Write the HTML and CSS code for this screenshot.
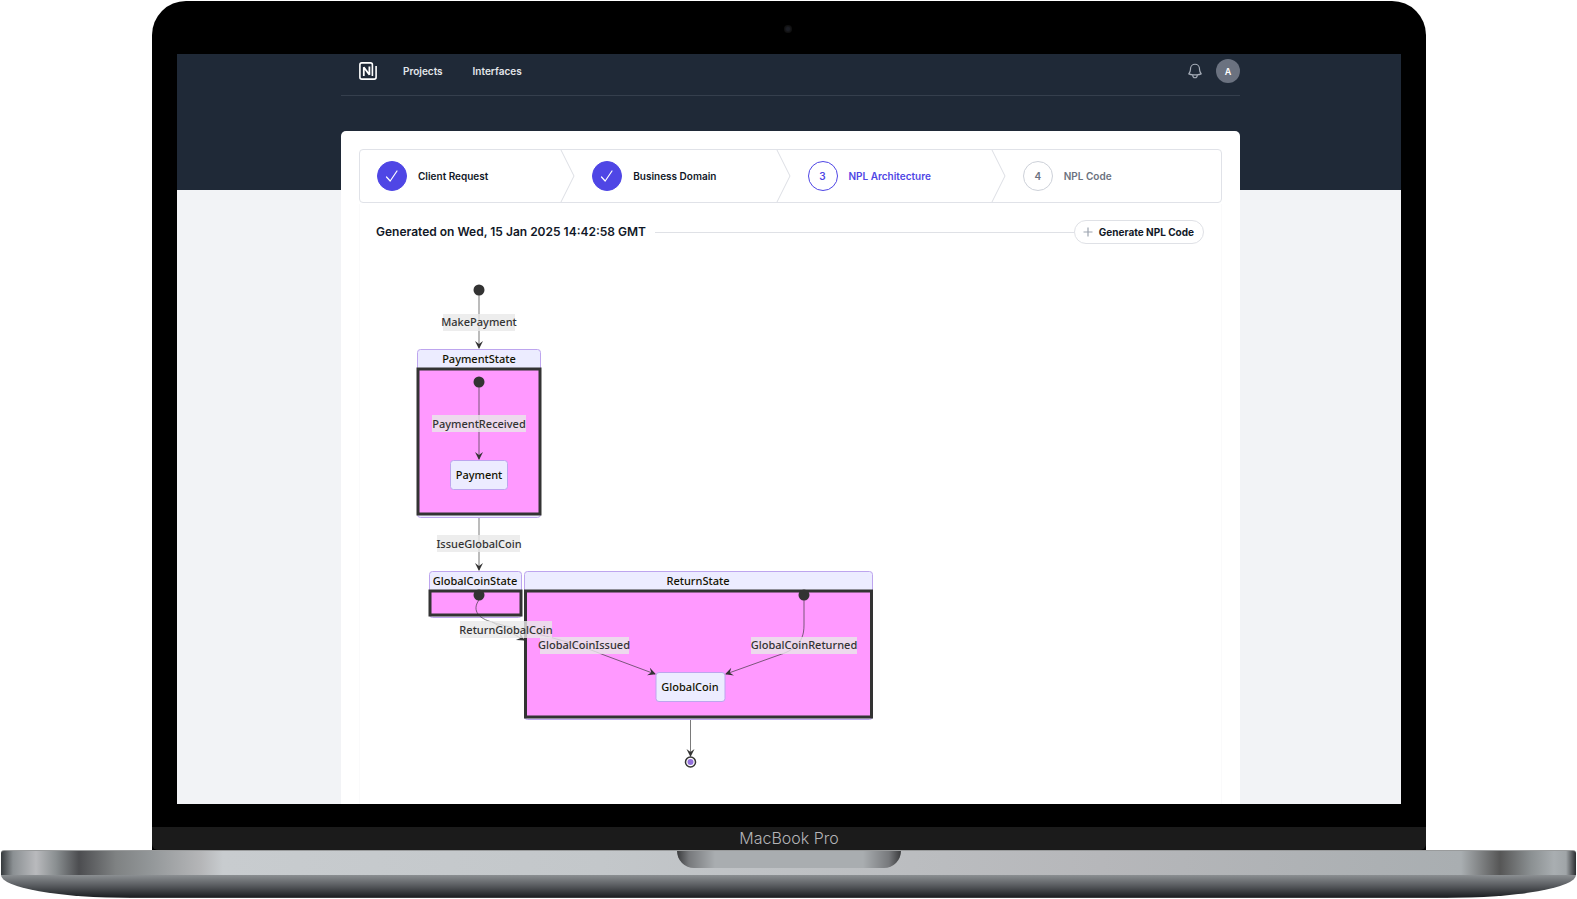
FILE: index.html
```html
<!DOCTYPE html>
<html lang="en">
<head>
<meta charset="utf-8">
<title>NPL Architecture</title>
<link rel="stylesheet" href="styles.css">
</head>
<body>
<div class="lid">
  <div class="bezel"><span class="camera"></span></div>
  <div class="screen">
    <header class="hero">
      <nav class="topbar">
        <a class="logo" href="#" aria-label="Home">
          <svg viewBox="0 0 18 18" width="18" height="18" fill="none" stroke="#fff"><path stroke-width="1.600" d="M13.4 14V2.8Q13.400 .9 11.500 .9H2.800Q.9 .9 .9 2.800V15.200Q.9 17.100 2.800 17.100H15.200Q17.100 17.100 17.100 15.200V4"/><path stroke-width="1.800" stroke-linejoin="bevel" d="M4.800 14V5.200L10.400 12.700V4.500"/></svg>
        </a>
        <a class="link" href="#">Projects</a>
        <a class="link" href="#">Interfaces</a>
        <button class="bell" type="button" aria-label="Notifications">
          <svg viewBox="0 0 24 24" width="18" height="18" fill="none" stroke="#a6adb8" stroke-width="1.6" stroke-linecap="round" stroke-linejoin="round"><path d="M14.857 17.082a23.848 23.848 0 005.454-1.31A8.967 8.967 0 0118 9.75v-.7V9A6 6 0 006 9v.75a8.967 8.967 0 01-2.312 6.022c1.733.64 3.56 1.085 5.455 1.31m5.714 0a24.255 24.255 0 01-5.714 0m5.714 0a3 3 0 11-5.714 0"/></svg>
        </button>
        <button class="avatar" type="button">A</button>
      </nav>
    </header>
    <main class="card">
      <ol class="steps">
        <li class="step done">
          <span class="mark"><svg viewBox="0 0 18 18" width="18" height="18" fill="none" stroke="#fff" stroke-width="1.2" stroke-linecap="round" stroke-linejoin="round"><path d="M3.5 10L7.2 14L14 4"/></svg></span>
          <span>Client Request</span>
          <svg class="chevron" viewBox="0 0 15 53" preserveAspectRatio="none"><path d="M1 0L14 26.500L1 53"/></svg>
        </li>
        <li class="step done">
          <span class="mark"><svg viewBox="0 0 18 18" width="18" height="18" fill="none" stroke="#fff" stroke-width="1.2" stroke-linecap="round" stroke-linejoin="round"><path d="M3.5 10L7.2 14L14 4"/></svg></span>
          <span>Business Domain</span>
          <svg class="chevron" viewBox="0 0 15 53" preserveAspectRatio="none"><path d="M1 0L14 26.500L1 53"/></svg>
        </li>
        <li class="step current">
          <span class="mark">3</span>
          <span>NPL Architecture</span>
          <svg class="chevron" viewBox="0 0 15 53" preserveAspectRatio="none"><path d="M1 0L14 26.500L1 53"/></svg>
        </li>
        <li class="step">
          <span class="mark">4</span>
          <span>NPL Code</span>
        </li>
      </ol>
      <section class="panel">
        <div class="heading">
          <h1>Generated on Wed, 15 Jan 2025 14:42:58 GMT</h1>
          <span class="rule"></span>
          <button class="generate" type="button">
            <svg viewBox="0 0 10 10" width="10" height="10" stroke="#9ca3af" stroke-width="1.2"><path d="M5 .5V9.500M.5 5H9.500"/></svg>
            Generate NPL Code
          </button>
        </div>
        <svg class="diagram" viewBox="376 260 520 520" width="520" height="520" role="img" aria-label="State diagram">
          <defs>
            <marker id="arrow" markerUnits="userSpaceOnUse" markerWidth="10" markerHeight="10" refX="8" refY="5" orient="auto"><path d="M9 5L1 1L4 5L1 9Z" fill="#333"/></marker>
          </defs>
          <g class="state">
            <rect x="417.5" y="349.5" width="123" height="168" rx="3"/>
            <rect x="429.500" y="571.500" width="92" height="46" rx="3"/>
            <rect x="524.500" y="571.500" width="348" height="148" rx="3"/>
          </g>
          <g class="region">
            <rect x="418" y="369" width="122" height="145"/>
            <rect x="430" y="591" width="91" height="24"/>
            <rect x="525.5" y="591" width="346" height="126"/>
          </g>
          <g class="edge">
            <path d="M479 295V348"/>
            <path d="M479 387V459"/>
            <path d="M479 518V570"/>
            <path d="M479 600C471 611 480 619 492 622C520 631 560 637 604 655L655 674"/>
            <path d="M492 622L524 640"/>
            <path d="M804 600V625C804 636 801 640 797 645C791 651 785 653 779 655L726 674"/>
            <path d="M690.5 720V756"/>
          </g>
          <g class="dot">
            <circle cx="479" cy="290" r="5.500"/>
            <circle cx="479" cy="382" r="5.500"/>
            <circle cx="479" cy="595" r="5.500"/>
            <circle cx="804" cy="595" r="5.500"/>
          </g>
          <circle class="end-ring" cx="690.5" cy="762" r="5"/>
          <circle class="end-core" cx="690.5" cy="762" r="3"/>
          <g class="state">
            <rect x="450.500" y="460.500" width="57" height="29" rx="3"/>
            <rect x="656" y="672.500" width="69" height="29" rx="3"/>
          </g>
          <g class="label-bg">
            <rect x="443" y="314" width="72" height="17"/>
            <rect x="432" y="415" width="94" height="17"/>
            <rect x="437" y="535" width="83" height="17"/>
            <rect x="460" y="621" width="92" height="17"/>
            <rect x="540" y="637" width="89" height="17"/>
            <rect x="751" y="637" width="106" height="17"/>
          </g>
          <g class="label">
            <text x="479" y="326">MakePayment</text>
            <text x="479" y="428">PaymentReceived</text>
            <text x="479" y="548">IssueGlobalCoin</text>
            <text x="506" y="634">ReturnGlobalCoin</text>
            <text x="584" y="649">GlobalCoinIssued</text>
            <text x="804" y="649">GlobalCoinReturned</text>
          </g>
          <g class="name">
            <text x="479" y="363">PaymentState</text>
            <text x="479" y="479">Payment</text>
            <text x="475" y="585">GlobalCoinState</text>
            <text x="698" y="585">ReturnState</text>
            <text x="690" y="691">GlobalCoin</text>
          </g>
        </svg>
      </section>
    </main>
  </div>
  <div class="chin">MacBook Pro</div>
</div>
<div class="base">
  <div class="deck"><span class="notch"></span></div>
  <div class="underside"></div>
</div>
</body>
</html>
```

FILE: styles.css
```css
* { box-sizing: border-box; }
body {
  margin: 0;
  min-height: 100vh;
  display: flex;
  flex-direction: column;
  background: #fff;
  font-family: Inter, "Liberation Sans", sans-serif;
  color: #111827;
}
button { font: inherit; cursor: pointer; }
a { color: inherit; text-decoration: none; }

.lid {
  flex: 1;
  display: flex;
  flex-direction: column;
  margin: 1px 151px 0 152px;
  background: #000;
  border-radius: 34px 34px 0 0;
}
.bezel {
  height: 53px;
  display: flex;
  align-items: center;
  justify-content: center;
}
.camera {
  width: 8px;
  height: 8px;
  margin-top: 3px;
  margin-right: 2px;
  border-radius: 50%;
  background: radial-gradient(#1b1d24 25%, #101010 60%);
}
.screen {
  flex: 1;
  display: flex;
  flex-direction: column;
  margin: 0 25px;
  padding: 0 161px 0 164px;
  overflow: hidden;
  background: linear-gradient(#1f2937 136px, #f2f3f6 136px);
}
.topbar {
  display: flex;
  align-items: center;
  height: 42px;
  padding: 0 0 7px 18px;
  border-bottom: 1px solid #353f4d;
}
.logo { display: flex; margin-right: 26px; }
.link {
  margin-right: 30px;
  font-size: 10px;
  font-weight: 600;
  color: #e3e6ea;
}
.bell {
  display: flex;
  margin-left: auto;
  margin-right: 12px;
  padding: 0;
  border: 0;
  background: none;
}
.avatar {
  width: 24px;
  height: 24px;
  padding: 0;
  border: 0;
  border-radius: 50%;
  background: #6b7280;
  color: #fff;
  font-size: 9px;
  font-weight: 600;
}

.card {
  flex: 1;
  display: flex;
  flex-direction: column;
  margin-top: 35px;
  padding: 18px 18px 0;
  border-radius: 5px 5px 0 0;
  background: #fff;
}
.steps {
  display: flex;
  height: 54px;
  margin: 0;
  padding: 0;
  list-style: none;
  border: 1px solid #e0e2e8;
  border-radius: 4px;
}
.step {
  flex: 1;
  position: relative;
  display: flex;
  align-items: center;
  gap: 11px;
  padding-left: 17px;
  font-size: 10px;
  font-weight: 600;
  color: #6b7280;
}
.mark {
  display: flex;
  align-items: center;
  justify-content: center;
  width: 30px;
  height: 30px;
  border: 1px solid #cdd1d9;
  border-radius: 50%;
}
.done { color: #111827; }
.done .mark { background: #4f46e5; border-color: #4f46e5; }
.current { color: #4f46e5; }
.current .mark { border-color: #4f46e5; }
.chevron {
  position: absolute;
  top: 0;
  right: 0;
  width: 15px;
  height: 100%;
  fill: none;
  stroke: #dcdee4;
}
.panel {
  flex: 1;
  margin-top: 1px;
  padding: 16px 17px 0 16px;
  border: 1px solid #fafafb;
  border-width: 0 1px;
}
.heading { display: flex; align-items: center; }
h1 {
  margin: 0 9px 0 0;
  font-size: 12px;
  line-height: 16px;
  font-weight: 600;
}
.rule { flex: 1; height: 1px; background: #dfe1e6; }
.generate {
  display: flex;
  align-items: center;
  gap: 6px;
  height: 24px;
  padding: 0 9px 0 8px;
  border: 1px solid #dfe1e6;
  border-radius: 12px;
  background: #fff;
  color: #111827;
  font-size: 10px;
  font-weight: 700;
}

.diagram {
  display: block;
  margin-top: 16px;
  font-family: "Noto Sans", sans-serif;
  font-size: 11px;
  font-weight: 500;
  text-anchor: middle;
}
.state { fill: #ececff; stroke: #bda5ee; }
.region { fill: #ff99ff; stroke: #333; stroke-width: 3; }
.edge { fill: none; stroke: #333; stroke-opacity: .65; }
.edge path { marker-end: url(#arrow); }
.edge marker path { marker-end: none; }
.dot { fill: #333; }
.end-ring { fill: #fff; stroke: #333; stroke-width: 1.5; }
.end-core { fill: #9370db; }
.label-bg { fill: #e8e8e8; fill-opacity: .8; }
.label { fill: #333; }
.name { fill: #131300; }

.chin {
  height: 23px;
  margin-top: 23px;
  border-radius: 0 0 6px 6px;
  background: #1b1b1b;
  color: #b4b4b7;
  font-size: 16px;
  font-weight: 300;
  line-height: 23px;
  text-align: center;
}

.base { margin: 0 1px 1px; }
.deck {
  display: flex;
  justify-content: center;
  height: 25px;
  border-top: 1px solid #999b9c;
  border-radius: 3px 3px 0 0;
  background: linear-gradient(90deg, #35393c 0, #8b9093 12px, #b9babd 35px, #8a8f91 55px, #4c4d50 78px, #7f8283 115px, #939799 150px, #b5b6b8 200px, #c8cccf 222px, #c3c7ca 600px, #b6b7ba 1100px, #a9aeb1 calc(100% - 115px), #565656 calc(100% - 76px), #8b9092 calc(100% - 45px), #a9aeb1 calc(100% - 22px), #a0a5a8 calc(100% - 10px), #2a2d30 100%);
}
.notch {
  width: 224px;
  height: 17px;
  border-radius: 0 0 17px 17px;
  background: linear-gradient(90deg, #3a3b3d 0, #77797c 12px, #a9adb0 38px, #a9adb0 calc(100% - 38px), #77797c calc(100% - 12px), #3a3b3d 100%);
}
.underside {
  height: 23px;
  border-radius: 0 0 130px 130px / 0 0 23px 23px;
  background: linear-gradient(#8b8f92, #5a5d61 45%, #1e2124 95%, #555 100%);
}
```
